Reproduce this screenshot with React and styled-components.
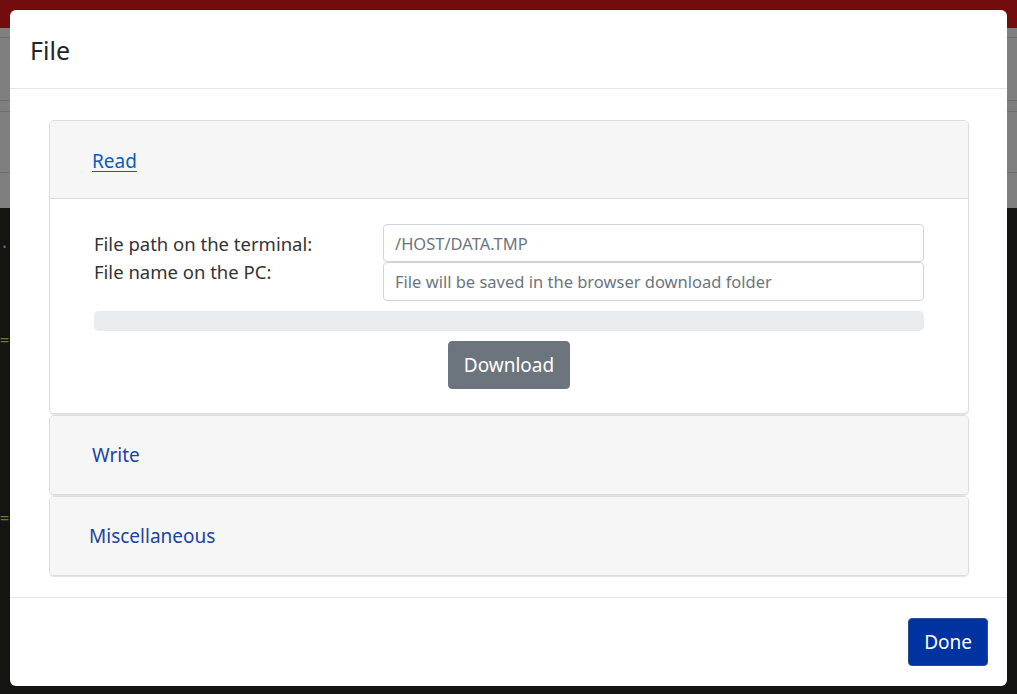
import React from "react";
import styled, { createGlobalStyle } from "styled-components";

const Global = createGlobalStyle`
  html, body { margin: 0; padding: 0; }
  body {
    font-family: "Noto Sans", "Open Sans", sans-serif;
    background: #282824;
    overflow: hidden;
  }
  * { box-sizing: border-box; }
`;

const Page = styled.div`
  height: 100vh;
  display: flex;
  flex-direction: column;
`;

const NavBar = styled.div`
  height: 28px;
  background: #e61818;
`;

const Toolbar = styled.div`
  background: #fefefe;
  display: flex;
  flex-direction: column;
`;

const ToolRow = styled.div`
  height: ${(p) => p.$h}px;
  border-top: ${(p) => (p.$line ? "1px solid #dcdcdc" : "none")};
`;

const Terminal = styled.div`
  flex: 1;
  background: #282824;
  padding-top: 26px;
  font-family: "DejaVu Sans Mono", monospace;
  font-size: 15px;
  color: #e8e860;
`;

const TermLine = styled.div`
  height: ${(p) => p.$h}px;
  white-space: pre;
`;

const Overlay = styled.div`
  position: fixed;
  inset: 0;
  background: rgba(0, 0, 0, 0.5);
  padding: 10px 10px 8px 10px;
  display: flex;
`;

const Dialog = styled.div`
  flex: 1;
  background: #fff;
  border-radius: 6px;
  display: flex;
  flex-direction: column;
  overflow: hidden;
`;

const Header = styled.div`
  height: 79px;
  border-bottom: 1px solid #e6e6e6;
  display: flex;
  align-items: center;
  padding: 0 20px;
`;

const Title = styled.h5`
  margin: 0;
  font-size: 25px;
  font-weight: 400;
  color: #212529;
  line-height: 1;
  position: relative;
  top: 1px;
`;

const Body = styled.div`
  flex: 1;
  padding: 31px 38px 0 39px;
  display: flex;
  flex-direction: column;
  gap: 1px;
`;

const Card = styled.div`
  border: 1px solid #dcdcdc;
  border-radius: 5px;
  overflow: hidden;
  box-shadow: 0 1px 1px rgba(0, 0, 0, 0.12);
`;

const CardHeader = styled.div`
  height: 78px;
  background: #f6f6f6;
  border-bottom: ${(p) => (p.$open ? "1px solid #dcdcdc" : "none")};
  display: flex;
  align-items: center;
  padding-left: ${(p) => p.$indent}px;
`;

const ToggleLink = styled.a`
  font-size: 19px;
  color: ${(p) => (p.$active ? "#0b5bbd" : "#1d43a2")};
  text-decoration: ${(p) => (p.$active ? "underline" : "none")};
  text-underline-offset: 3px;
  cursor: pointer;
  position: relative;
  top: ${(p) => (p.$active ? 1 : 0)}px;
`;

const CardBody = styled.div`
  padding: 25px 44px 24px 44px;
  display: flex;
  flex-direction: column;
`;

const FormGrid = styled.div`
  display: grid;
  grid-template-columns: 289px 1fr;
`;

const Labels = styled.div`
  display: flex;
  flex-direction: column;
  padding-top: 6px;
`;

const Label = styled.label`
  font-size: 18.5px;
  line-height: 28px;
  color: #333;
`;

const Inputs = styled.div`
  display: flex;
  flex-direction: column;
`;

const Input = styled.input`
  height: ${(p) => p.$h || 38}px;
  border: 1px solid #ced4da;
  border-radius: 4px;
  padding: 0 11px;
  font-family: inherit;
  font-size: 16.5px;
  color: #495057;
  outline: none;
  &::placeholder { color: #6c757d; }
`;

const Progress = styled.div`
  height: 20px;
  margin-top: 10px;
  background: #e9ecef;
  border-radius: 5px;
`;

const Center = styled.div`
  display: flex;
  justify-content: center;
  margin-top: 10px;
`;

const Button = styled.button`
  height: 48px;
  padding: 0 15px;
  border-radius: 4px;
  border: 1px solid ${(p) => (p.$primary ? "#2a4a95" : "#6c757d")};
  background: ${(p) => (p.$primary ? "#0033a0" : "#6c757d")};
  color: #fff;
  font-family: inherit;
  font-size: 19px;
  cursor: pointer;
`;

const Footer = styled.div`
  height: 89px;
  border-top: 1px solid #e6e6e6;
  display: flex;
  justify-content: flex-end;
  align-items: flex-start;
  padding: 20px 19px 0 0;
`;

export default function App() {
  return (
    <>
      <Global />
      <Page>
        <NavBar />
        <Toolbar>
          <ToolRow $h={9} />
          <ToolRow $h={63} $line />
          <ToolRow $h={11} $line />
          <ToolRow $h={61} $line />
          <ToolRow $h={36} $line />
        </Toolbar>
        <Terminal>
          <TermLine $h={97}>.</TermLine>
          <TermLine $h={178}>=]</TermLine>
          <TermLine $h={20}>=]</TermLine>
        </Terminal>
      </Page>
      <Overlay>
        <Dialog role="dialog">
          <Header>
            <Title>File</Title>
          </Header>
          <Body>
            <Card>
              <CardHeader $open $indent={42}>
                <ToggleLink $active>Read</ToggleLink>
              </CardHeader>
              <CardBody>
                <FormGrid>
                  <Labels>
                    <Label>File path on the terminal:</Label>
                    <Label>File name on the PC:</Label>
                  </Labels>
                  <Inputs>
                    <Input placeholder="/HOST/DATA.TMP" />
                    <Input $h={39} placeholder="File will be saved in the browser download folder" />
                  </Inputs>
                </FormGrid>
                <Progress />
                <Center>
                  <Button>Download</Button>
                </Center>
              </CardBody>
            </Card>
            <Card>
              <CardHeader $indent={42}>
                <ToggleLink>Write</ToggleLink>
              </CardHeader>
            </Card>
            <Card>
              <CardHeader $indent={39}>
                <ToggleLink>Miscellaneous</ToggleLink>
              </CardHeader>
            </Card>
          </Body>
          <Footer>
            <Button $primary>Done</Button>
          </Footer>
        </Dialog>
      </Overlay>
    </>
  );
}
